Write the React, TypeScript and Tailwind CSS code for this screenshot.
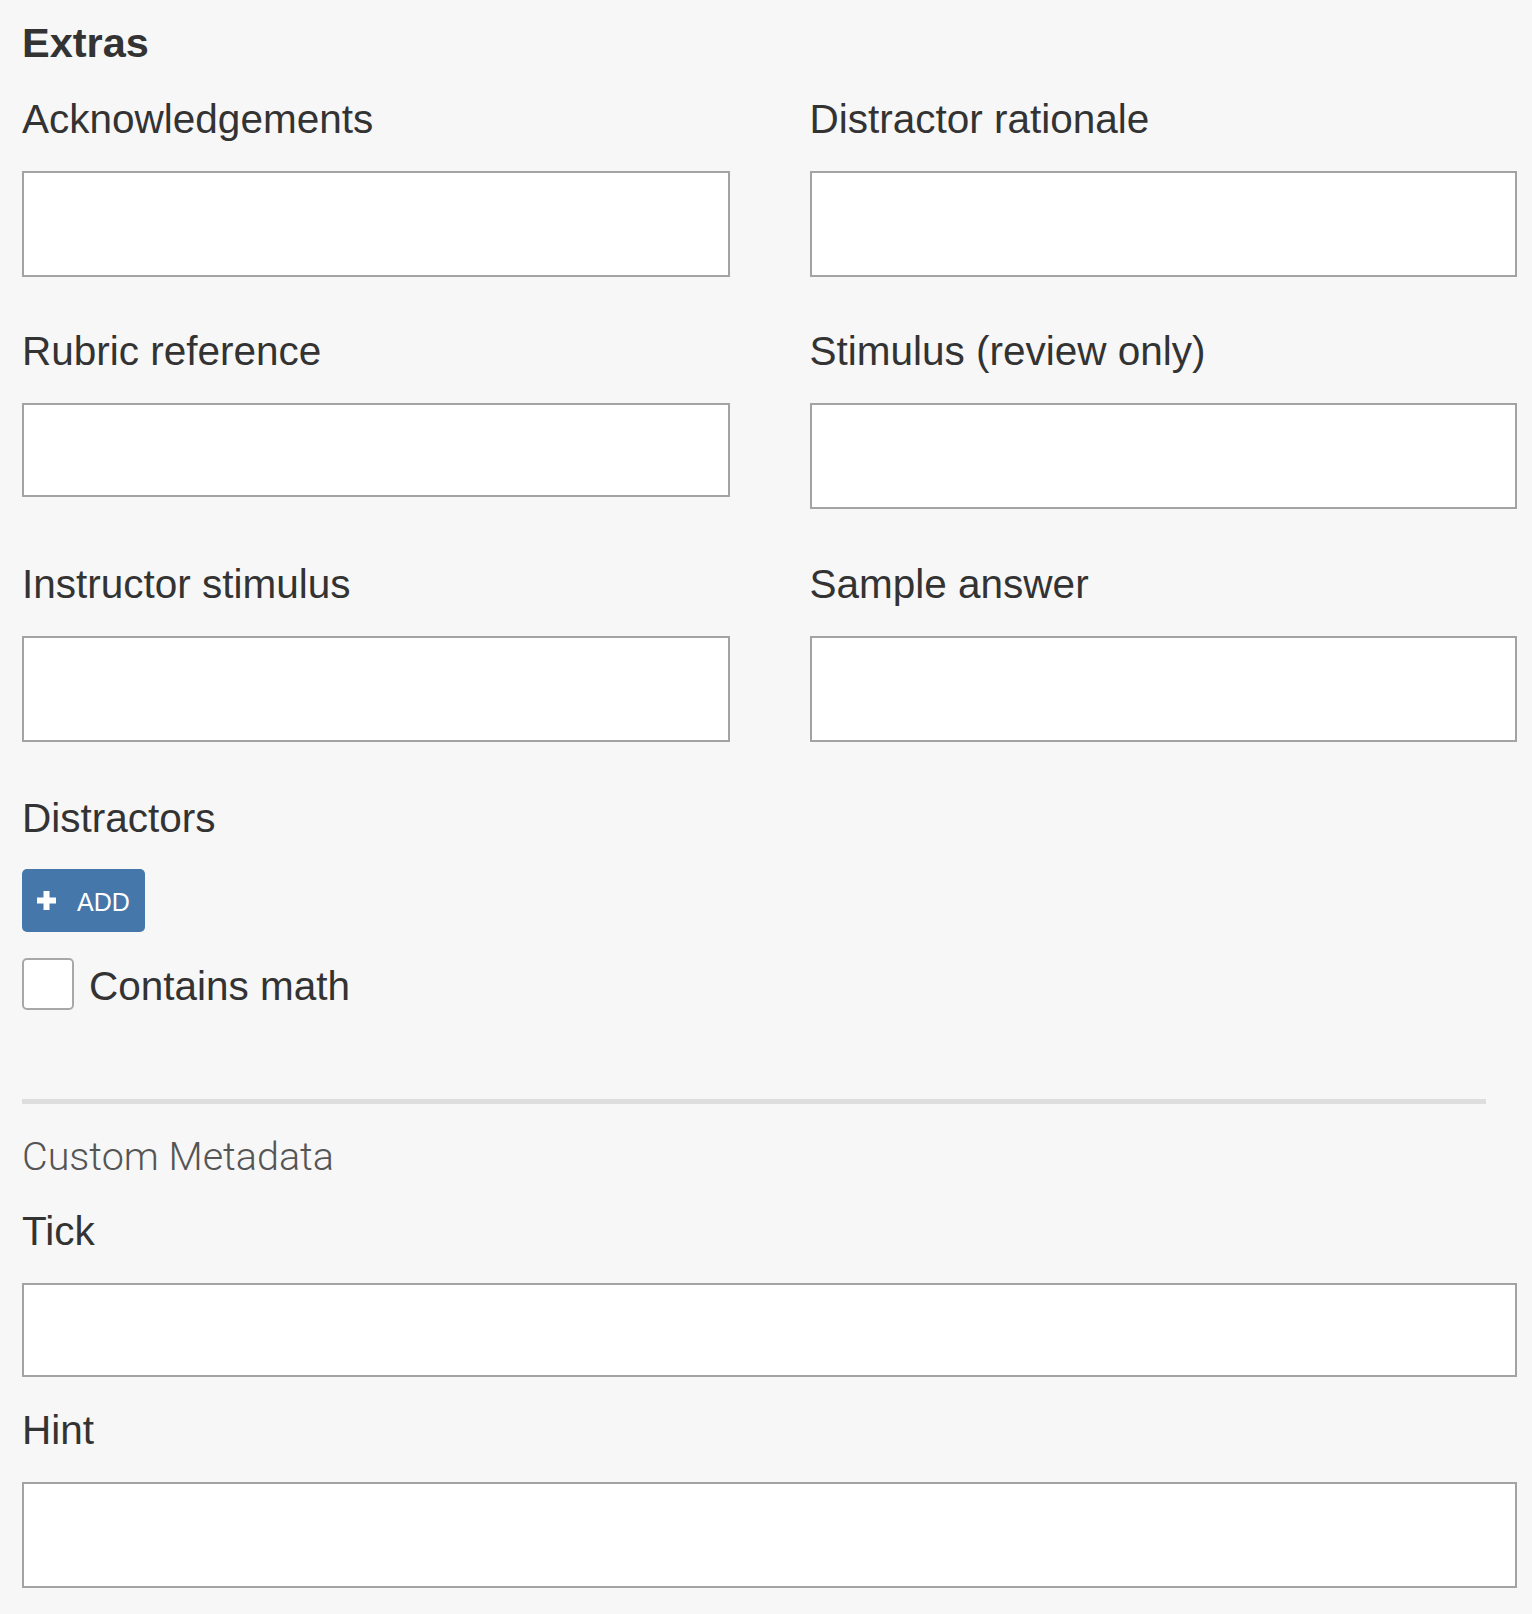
import React from "react";

type FieldProps = {
  label: string;
  short?: boolean;
};

function Field({ label, short = false }: FieldProps) {
  return (
    <div>
      <label className="block text-[40.5px] leading-[45px] text-[#333]">
        {label}
      </label>
      <input
        type="text"
        className={
          short
            ? "mt-[29px] block h-[94px] w-full border-2 border-[#a3a3a3] bg-white"
            : "mt-[29px] block h-[106px] w-full border-2 border-[#a3a3a3] bg-white"
        }
      />
    </div>
  );
}

function PlusIcon() {
  return (
    <svg width="19" height="19" viewBox="0 0 19 19" className="shrink-0" aria-hidden>
      <rect x="6.5" y="0" width="6" height="19" fill="#fff" />
      <rect x="0" y="6.5" width="19" height="6" fill="#fff" />
    </svg>
  );
}

export default function App() {
  return (
    <div className="min-h-screen bg-[#f7f7f7] pl-[22px] pr-[15px] pt-[20px] pb-[26px] font-['Helvetica_Neue','Liberation_Sans',Arial,sans-serif] text-[#333]">
      <h2 className="mb-[31.5px] text-[41.5px] font-bold leading-[45px]">Extras</h2>

      <div className="grid grid-cols-2 gap-x-[80px] gap-y-[52.5px]">
        <Field label="Acknowledgements" />
        <Field label="Distractor rationale" />
        <Field label="Rubric reference" short />
        <Field label="Stimulus (review only)" />
        <Field label="Instructor stimulus" />
        <Field label="Sample answer" />
      </div>

      <div className="mt-[54.5px]">
        <label className="block text-[40.5px] leading-[45px]">Distractors</label>
        <button
          type="button"
          className="mt-[28px] flex h-[63px] w-[123px] items-center gap-[21px] rounded-[5px] bg-[#4677ab] pl-[15px] text-[25px] leading-none text-white"
        >
          <PlusIcon />
          <span className="pt-[4px]">ADD</span>
        </button>

        <label className="mt-[26px] flex items-start gap-[15px]">
          <span className="block h-[52px] w-[52px] rounded-[5px] border-2 border-[#a8a8a8] bg-white" />
          <span className="mt-[6px] text-[40.5px] leading-[45px]">Contains math</span>
        </label>
      </div>

      <div className="mr-[31px] mt-[89px] h-[5px] bg-[#dedede]" />

      <h3 className="mt-[30px] font-['Roboto',sans-serif] text-[39.5px] font-light leading-[45px] text-[#555]">
        Custom Metadata
      </h3>

      <div className="mt-[29.5px]">
        <Field label="Tick" short />
      </div>
      <div className="mt-[31.5px]">
        <Field label="Hint" />
      </div>
    </div>
  );
}
